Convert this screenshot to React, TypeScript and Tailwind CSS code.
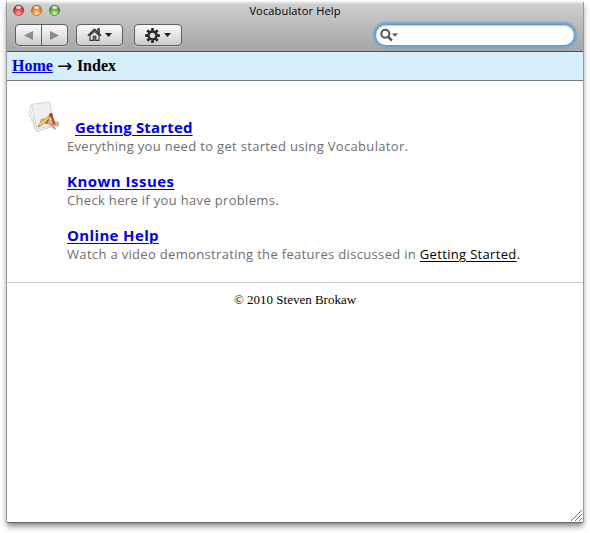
import React from "react";

const BUTTON =
  "flex h-[22px] items-center rounded-[4px] border border-[#5e5e5e] bg-linear-to-b from-[#fafafa] via-[#e6e6e6] to-[#cbcbcb] shadow-[0_1px_0_rgba(255,255,255,0.35)]";

function Light({ id, dark, mid, glow }: { id: string; dark: string; mid: string; glow: string }) {
  return (
    <svg width="12" height="12" viewBox="0 0 12 12">
      <defs>
        <radialGradient id={id} cx="50%" cy="85%" r="80%">
          <stop offset="0" stopColor={glow} />
          <stop offset="0.5" stopColor={mid} />
          <stop offset="1" stopColor={dark} />
        </radialGradient>
      </defs>
      <circle cx="5.6" cy="6.3" r="5.1" fill={`url(#${id})`} stroke={dark} strokeWidth="0.7" />
      <ellipse cx="5.6" cy="3.4" rx="2.8" ry="1.6" fill="#fff" opacity="0.75" />
    </svg>
  );
}

function Caret() {
  return (
    <svg width="7" height="4" viewBox="0 0 7 4">
      <path d="M0 0h7L3.5 4z" fill="#222" />
    </svg>
  );
}

function HomeIcon() {
  return (
    <svg width="15" height="14" viewBox="0 0 15 14" fill="none" stroke="#333">
      <path d="M3 7.3v5.1h9V7.3L7.5 3.4z" strokeWidth="1.1" fill="#e6e6e6" />
      <path d="M10.8 4V.9h1.5v4.4" strokeWidth="1.2" />
      <path d="M.9 7.8 7.5 1.4l6.6 6.4" strokeWidth="1.6" />
      <path d="M6.3 12.5V8.3h2.5v4.2" strokeWidth="1.1" fill="#888" />
    </svg>
  );
}

function GearIcon() {
  return (
    <svg width="15" height="15" viewBox="-7.5 -7.5 15 15">
      <g fill="#2b2b2b">
        {[0, 45, 90, 135].map((a) => (
          <rect key={a} x="-1.4" y="-7.4" width="2.8" height="14.8" rx=".4" transform={`rotate(${a})`} />
        ))}
        <circle r="5" />
      </g>
      <circle r="2.7" fill="#dedede" />
    </svg>
  );
}

function PapersIcon() {
  return (
    <svg width="34" height="34" viewBox="0 0 34 34" className="block">
      <g stroke="#c4c4c4" strokeWidth=".7">
        <path d="M1.4 12.5 4 10l18-4 5 20-17 5.3-1.5-2z" fill="#f8f8f8" />
        <path d="M2.5 6.5 22 3l4 23-16.5 5.5z" fill="#fcfcfc" />
        <path d="M4.5 4.3 23 2l3.2 23.4-16.2 3.4z" fill="#f0f0f0" />
      </g>
      <path d="m13.5 19.5 3-.9L32 22.4l-.8 4-4.2-.6-13.6-3.6z" fill="#dfb394" stroke="#bf8a66" strokeWidth=".4" />
      <path d="m21 22 4.5 1.5 4 6.3-3-.9z" fill="#d09a78" />
      <path d="m23 13.5 2 .1 3.5 10.7-2 .5-3-8.1-3.8 7.3-1.3-.5z" fill="#b64632" />
      <path d="m21.5 15.8 1.6 1.8-8.7 8-3.4 1.2 1.2-3z" fill="#f6d052" stroke="#a98235" strokeWidth=".6" />
      <path d="m11.2 27 .5-1.4.9.9z" fill="#333" />
      <circle cx="24" cy="14.3" r="1.3" fill="#a33228" />
    </svg>
  );
}

function Toolbar() {
  return (
    <header className="flex h-[50px] flex-col border-t-2 border-b border-t-[#dedede] border-b-[#505050] bg-linear-to-b from-[#cecece] to-[#a6a6a6]">
      <div className="grid h-5 grid-cols-[1fr_auto_1fr] items-start px-[6px]">
        <div className="flex gap-[6px]">
          <Light id="close" dark="#a42022" mid="#ea4d4e" glow="#ffb5ae" />
          <Light id="minimise" dark="#a75c1c" mid="#ed9a4b" glow="#ffe9a0" />
          <Light id="zoom" dark="#3d7729" mid="#72b957" glow="#d5ffb4" />
        </div>
        <h1 className="-mt-px font-['Open_Sans',sans-serif] text-[11px] leading-[15px] font-medium tracking-[0.16px] text-black">Vocabulator Help</h1>
      </div>
      <div className="flex h-[22px] pl-2 pr-[8px]">
        <div className={`${BUTTON} w-[53px]`}>
          <div className="flex h-full w-[26px] items-center justify-center border-r border-[#5e5e5e]">
            <svg width="9" height="9" viewBox="0 0 9 9"><path d="M9 0v9L0 4.5z" fill="#8b8b8b" /></svg>
          </div>
          <div className="flex flex-1 items-center justify-center">
            <svg width="9" height="9" viewBox="0 0 9 9"><path d="M0 0v9l9-4.5z" fill="#8b8b8b" /></svg>
          </div>
        </div>
        <div className={`${BUTTON} ml-2 w-[47px] gap-[3px] pl-[10px]`}><HomeIcon /><Caret /></div>
        <div className={`${BUTTON} ml-[11px] w-12 gap-[4px] pl-[10px]`}><GearIcon /><Caret /></div>
        <div className="ml-auto flex h-[22px] w-[200px] items-center rounded-full border border-[#6898c6] bg-white pl-1 shadow-[0_0_2px_2px_#71a5d3,inset_0_1px_1px_#b8cde0]">
          <svg width="19" height="14" viewBox="0 0 19 14" fill="none">
            <circle cx="5.3" cy="5.8" r="4" stroke="#555" strokeWidth="2" />
            <path d="m8.3 8.8 3.6 3.8" stroke="#555" strokeWidth="2.5" />
            <path d="M12 5.5h6l-3 3.2z" fill="#555" />
          </svg>
        </div>
      </div>
    </header>
  );
}

interface TopicProps {
  title: string;
  tracking: string;
  children: React.ReactNode;
  icon?: React.ReactNode;
}

function Topic({ title, tracking, children, icon }: TopicProps) {
  return (
    <section className="relative h-[54px] pl-[60px]">
      {icon}
      <h2 className={`h-5 whitespace-nowrap text-[15px] leading-5 font-bold ${tracking} ${icon ? "pl-2" : ""}`}>
        <a href="#" className="text-[#0000e6] underline decoration-1 underline-offset-2">{title}</a>
      </h2>
      <p className="whitespace-nowrap text-[13px] leading-[18px] font-medium tracking-[0.325px] text-[#6e6e6e]">{children}</p>
    </section>
  );
}

export default function App() {
  return (
    <div className="h-[533px] w-[590px] overflow-hidden bg-white pt-[2px] pl-[7px]">
      <main className="relative flex h-[520px] w-[576px] flex-col bg-white shadow-[-1px_0_0_0_#999,1px_0_0_0_#999,0_1px_0_0_#666,0_4px_6px_0_rgba(0,0,0,0.5)]">
        <Toolbar />
        <nav className="h-[29px] border-b border-[#777] bg-[#d6edfa] pl-[5px] font-['Liberation_Serif',serif] text-[16px] leading-[28px] font-bold text-black">
          <a href="#" className="text-[#0000ee] underline">Home</a>
          <span className="relative top-px inline-block w-6 text-center font-['DejaVu_Sans',sans-serif] text-[18px] leading-none font-normal">→</span>
          Index
        </nav>
        <div className="h-[202px] border-b border-[#ccc] pt-[36px] font-['Open_Sans',sans-serif]">
          <Topic title="Getting Started" tracking="tracking-[0.17px]" icon={<div className="absolute top-[-17px] left-5"><PapersIcon /></div>}>
            Everything you need to get started using Vocabulator.
          </Topic>
          <Topic title="Known Issues" tracking="tracking-[0.48px]">Check here if you have problems.</Topic>
          <Topic title="Online Help" tracking="tracking-[0.36px]">
            Watch a video demonstrating the features discussed in{" "}
            <span className="text-black"><a href="#" className="underline underline-offset-2">Getting Started</a>.</span>
          </Topic>
        </div>
        <footer className="pt-[9px] text-center font-['Liberation_Serif',serif] text-[13px] leading-4 text-black">© 2010 Steven Brokaw</footer>
        <svg className="absolute right-px bottom-px" width="11" height="11" viewBox="0 0 11 11" stroke="#777">
          <path d="M0 11 11 0M4 11l7-7M8 11l3-3" />
        </svg>
      </main>
    </div>
  );
}
